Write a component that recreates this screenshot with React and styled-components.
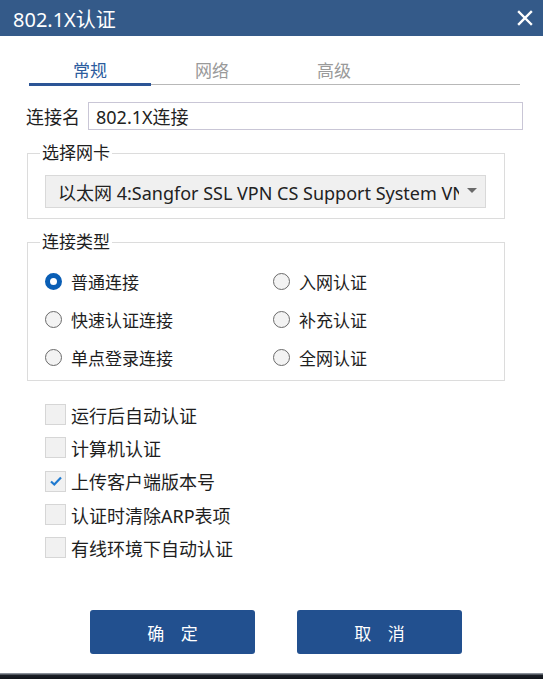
import React from 'react';
import styled, { createGlobalStyle } from 'styled-components';

const GlobalStyle = createGlobalStyle`
  html, body {
    margin: 0;
    padding: 0;
    background: #ffffff;
  }
  body {
    font-family: "Noto Sans", "Noto Sans CJK SC", sans-serif;
    color: #1e1e1e;
  }
`;

const Window = styled.div`
  width: 543px;
  height: 679px;
  display: flex;
  flex-direction: column;
  background: #fff;
  overflow: hidden;
`;

const TitleBar = styled.div`
  height: 36px;
  flex: none;
  background: #345a89;
  display: flex;
  align-items: center;
  justify-content: space-between;
  padding: 0 8px 0 13px;
  color: #fff;
  font-size: 20px;
`;

const CloseBtn = styled.div`
  width: 20px;
  height: 20px;
  display: flex;
  align-items: center;
  justify-content: center;
`;

const Tabs = styled.div`
  margin: 18px 23px 0 29px;
  display: flex;
  border-bottom: 1px solid #b8b8b8;
  height: 30px;
`;

const Tab = styled.div`
  width: 122px;
  display: flex;
  align-items: center;
  justify-content: center;
  font-size: 17px;
  color: ${p => (p.$active ? '#2c5c9e' : '#9a9a9a')};
  border-bottom: ${p => (p.$active ? '3px solid #2c5596' : '3px solid transparent')};
  margin-bottom: -2px;
  padding-top: 1px;
`;

const NameRow = styled.div`
  margin: 17px 20px 0 26px;
  display: flex;
  align-items: center;
  gap: 8px;
  font-size: 18px;
`;

const TextInput = styled.div`
  flex: 1;
  height: 26px;
  border: 1px solid #c9c6d6;
  display: flex;
  align-items: center;
  padding-left: 7px;
  font-size: 18px;
  color: #222;
`;

const Group = styled.fieldset`
  margin: ${p => p.$top}px 38px 0 27px;
  padding: 0;
  border: 1px solid #dcdcdc;
  min-width: 0;
`;

const Legend = styled.legend`
  margin-left: 12px;
  padding: 0 2px;
  font-size: 17px;
  line-height: 20px;
  color: #1e1e1e;
`;

const Select = styled.div`
  margin: 12px 18px 10px 17px;
  height: 31px;
  border: 1px solid #d9d9d9;
  background: #f0f0f0;
  display: flex;
  align-items: center;
  padding: 0 8px 0 12px;
  font-size: 18px;
  color: #222;
`;

const SelectText = styled.div`
  flex: 1;
  white-space: nowrap;
  overflow: hidden;
  margin-right: 8px;
`;

const Arrow = styled.div`
  width: 0;
  height: 0;
  border-left: 5px solid transparent;
  border-right: 5px solid transparent;
  border-top: 5px solid #6a6a6a;
  margin-bottom: 2px;
`;

const RadioGrid = styled.div`
  margin: 10px 0 4px 17px;
  display: grid;
  grid-template-columns: 228px 1fr;
  grid-auto-rows: 38px;
`;

const RadioItem = styled.label`
  display: flex;
  align-items: center;
  gap: 9px;
  font-size: 17px;
`;

const RadioDot = styled.span`
  width: ${p => (p.$checked ? 7 : 15)}px;
  height: ${p => (p.$checked ? 7 : 15)}px;
  border-radius: 50%;
  border: ${p => (p.$checked ? '5px solid #0a5eb5' : '1px solid #6a6a6a')};
  background: ${p => (p.$checked ? '#ffffff' : '#f3f3f3')};
  flex: none;
`;

const CheckList = styled.div`
  margin: 17px 0 0 45px;
  display: flex;
  flex-direction: column;
`;

const CheckItem = styled.label`
  height: 33.3px;
  display: flex;
  align-items: center;
  gap: 5px;
  font-size: 18px;
`;

const Box = styled.span`
  width: 19px;
  height: 19px;
  border: 1px solid #d6d6d6;
  background: #f1f1f1;
  display: flex;
  align-items: center;
  justify-content: center;
  flex: none;
`;

const Footer = styled.div`
  margin: auto 0 0 90px;
  display: flex;
  gap: 42px;
  padding-bottom: 19px;
`;

const Button = styled.div`
  width: 165px;
  height: 44px;
  border-radius: 3px;
  background: #22508f;
  color: #fff;
  display: flex;
  align-items: center;
  justify-content: center;
  font-size: 17px;
  letter-spacing: 6px;
  padding-left: 6px;
  box-sizing: border-box;
`;

const BottomEdge = styled.div`
  height: 6px;
  flex: none;
  background: linear-gradient(#8a9099 0, #8a9099 1px, #1b1f27 2px, #11141a 100%);
`;

const radios = [
  ['普通连接', true],
  ['入网认证', false],
  ['快速认证连接', false],
  ['补充认证', false],
  ['单点登录连接', false],
  ['全网认证', false],
];

const checks = [
  ['运行后自动认证', false],
  ['计算机认证', false],
  ['上传客户端版本号', true],
  ['认证时清除ARP表项', false],
  ['有线环境下自动认证', false],
];

export default function App() {
  return (
    <>
      <GlobalStyle />
      <Window>
        <TitleBar>
          <span>802.1X认证</span>
          <CloseBtn>
            <svg width="16" height="16" viewBox="0 0 16 16">
              <path d="M2 2 L14 14 M14 2 L2 14" stroke="#fff" strokeWidth="2.4" strokeLinecap="square" />
            </svg>
          </CloseBtn>
        </TitleBar>

        <Tabs>
          <Tab $active>常规</Tab>
          <Tab>网络</Tab>
          <Tab>高级</Tab>
        </Tabs>

        <NameRow>
          <span>连接名</span>
          <TextInput>802.1X连接</TextInput>
        </NameRow>

        <Group $top={13}>
          <Legend>选择网卡</Legend>
          <Select>
            <SelectText>以太网 4:Sangfor SSL VPN CS Support System VNIC</SelectText>
            <Arrow />
          </Select>
        </Group>

        <Group $top={13}>
          <Legend>连接类型</Legend>
          <RadioGrid>
            {radios.map(([label, checked]) => (
              <RadioItem key={label}>
                <RadioDot $checked={checked} />
                {label}
              </RadioItem>
            ))}
          </RadioGrid>
        </Group>

        <CheckList>
          {checks.map(([label, checked]) => (
            <CheckItem key={label}>
              <Box>
                {checked && (
                  <svg width="14" height="12" viewBox="0 0 14 12">
                    <path d="M2 6.5 L5.3 9.5 L12 2.5" fill="none" stroke="#1f7ad0" strokeWidth="2.2" />
                  </svg>
                )}
              </Box>
              {label}
            </CheckItem>
          ))}
        </CheckList>

        <Footer>
          <Button>确 定</Button>
          <Button>取 消</Button>
        </Footer>
        <BottomEdge />
      </Window>
    </>
  );
}
